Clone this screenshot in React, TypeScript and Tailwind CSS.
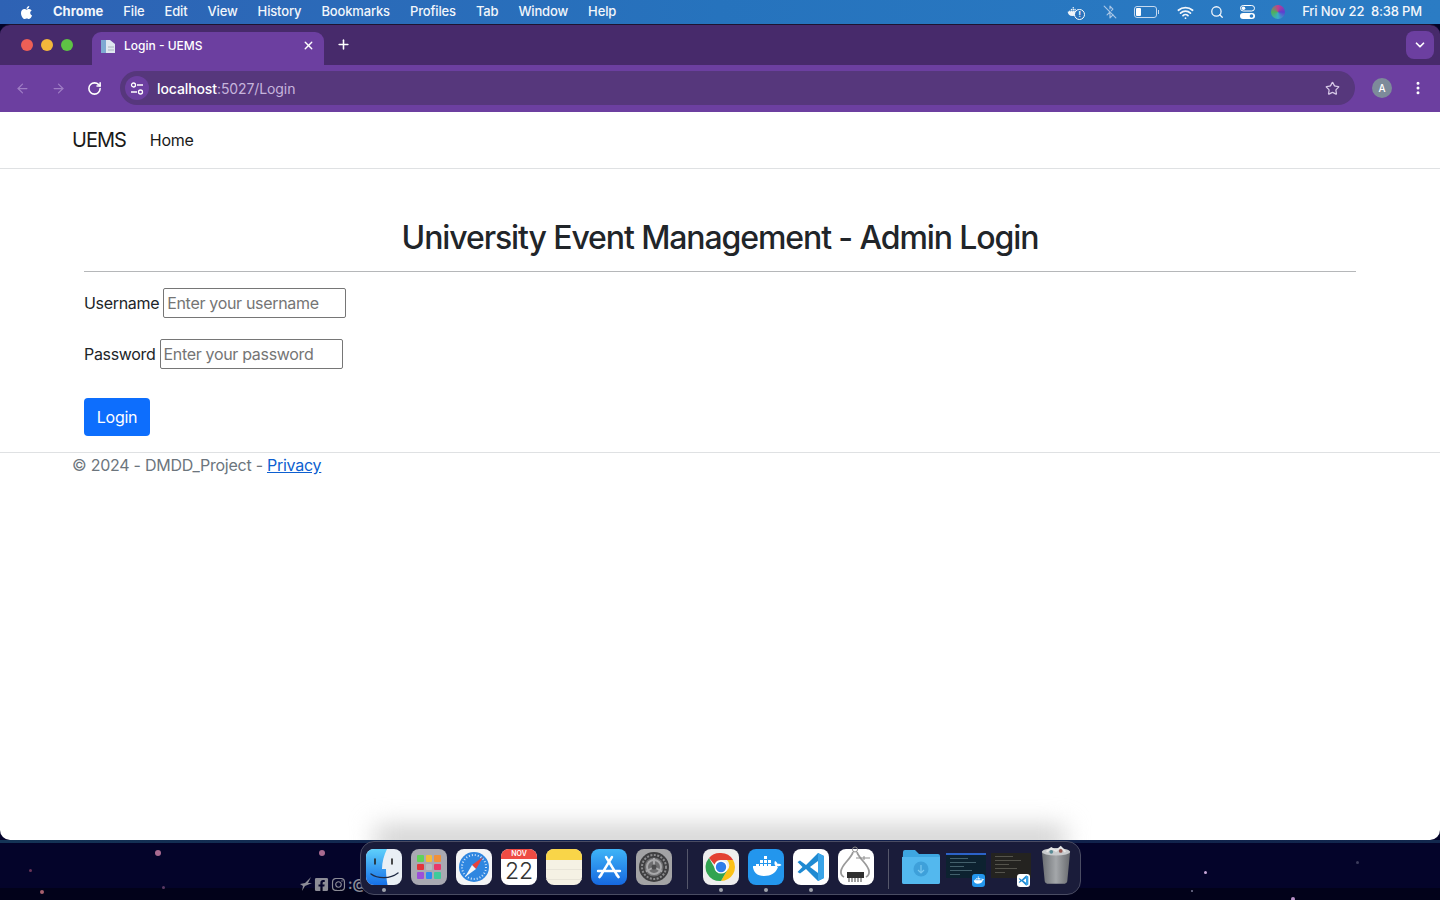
import React from 'react';
import { ArrowLeft, ArrowRight, RotateCw, Star, EllipsisVertical, ChevronDown, X, Plus, Search, Wifi, BluetoothOff } from 'lucide-react';
import { FaApple, FaFacebookSquare, FaInstagram } from 'react-icons/fa';

const FONT = 'font-[Inter,"Liberation_Sans",sans-serif]';

function FinderIcon() {
  return (
    <svg width="36" height="36" viewBox="0 0 36 36">
      <defs>
        <linearGradient id="fl" x1="0" y1="0" x2="0" y2="1"><stop offset="0" stopColor="#5fd0fb" /><stop offset="1" stopColor="#1670e8" /></linearGradient>
      </defs>
      <rect width="36" height="36" rx="8" fill="#e9eff5" />
      <path d="M8 0h13c-3 6-5 13-5 20h4c0 5 .5 11 1.500 16H8a8 8 0 0 1-8-8V8a8 8 0 0 1 8-8z" fill="url(#fl)" />
      <path d="M9 10v5M26 10v5" stroke="#222" strokeWidth="1.600" strokeLinecap="round" />
      <path d="M5 25c7 5 19 5 27-1" stroke="#1f2a44" strokeWidth="1.400" fill="none" strokeLinecap="round" />
    </svg>
  );
}

function LaunchpadIcon() {
  const colors = ['#5fd35a', '#f4bb3a', '#f0913a', '#e3343a', '#b8bcc0', '#e8386a', '#9b4fd8', '#2b8cf0', '#3ecb9a'];
  return (
    <div className="w-9 h-9 rounded-lg bg-[#a9a9b2] grid grid-cols-3 gap-[2px] p-[6px]">
      {colors.map((c, i) => <div key={i} className="rounded-[1px]" style={{ background: c }} />)}
    </div>
  );
}

function SafariIcon() {
  return (
    <svg width="36" height="36" viewBox="0 0 36 36">
      <rect width="36" height="36" rx="8" fill="#f3f4f6" />
      <circle cx="18" cy="18" r="15" fill="#2f86e0" />
      <circle cx="18" cy="18" r="12" fill="none" stroke="#cfe5fb" strokeWidth="2" strokeDasharray="1 2" />
      <path d="M27 8 16 16l4 4z" fill="#e8423c" />
      <path d="M9 28l7-12 4 4z" fill="#f4f6f8" />
    </svg>
  );
}

function CalendarIcon() {
  return (
    <div className="w-9 h-9 rounded-lg bg-white overflow-hidden flex flex-col items-center">
      <div className="w-full h-[10px] bg-[#ee4b43] text-white text-[7px] leading-[10px] font-semibold text-center">NOV</div>
      <div className="text-[#333] text-[23px] leading-[25px] font-light">22</div>
    </div>
  );
}

function NotesIcon() {
  return (
    <div className="w-9 h-9 rounded-lg bg-[#f5f1e4] overflow-hidden">
      <div className="h-[11px] bg-[#f9d548]" />
      <div className="h-[10px] border-b border-[#e8e4d8]" />
      <div className="h-[10px] border-b border-[#e8e4d8]" />
    </div>
  );
}

function AppStoreIcon() {
  return (
    <svg width="36" height="36" viewBox="0 0 36 36">
      <defs>
        <linearGradient id="as" x1="0" y1="0" x2="0" y2="1"><stop offset="0" stopColor="#3fb4f7" /><stop offset="1" stopColor="#1668e0" /></linearGradient>
      </defs>
      <rect width="36" height="36" rx="8" fill="url(#as)" />
      <path d="M15 8l11 18M21 8 10 26M7 22h22" stroke="#fff" strokeWidth="2.400" strokeLinecap="round" fill="none" />
      <path d="M26 26l1.500 2M10 26l-1.500 2" stroke="#fff" strokeWidth="2.800" strokeLinecap="round" />
    </svg>
  );
}

function SettingsIcon() {
  return (
    <svg width="36" height="36" viewBox="0 0 36 36">
      <rect width="36" height="36" rx="8" fill="#a3a3a5" />
      <circle cx="18" cy="18" r="15" fill="#3f3f41" />
      <circle cx="18" cy="18" r="12" fill="none" stroke="#8c8c8e" strokeWidth="2" strokeDasharray="2 1.500" />
      <circle cx="18" cy="18" r="9.500" fill="#6e6e70" />
      <circle cx="18" cy="18" r="7" fill="none" stroke="#a8a8aa" strokeWidth="2" />
      <path d="M18 18V9M18 18l8 4.500M18 18l-8 4.500" stroke="#a8a8aa" strokeWidth="2" />
      <circle cx="18" cy="18" r="2.500" fill="#4c4c4e" />
    </svg>
  );
}

function ChromeIcon({ size = 36 }: { size?: number }) {
  return (
    <svg width={size} height={size} viewBox="0 0 36 36">
      <rect width="36" height="36" rx="8" fill="#eeeeee" />
      <path d="M18 4a14 14 0 0 1 12.100 7H18a7 7 0 0 0-6.500 4.400L6 8.900A14 14 0 0 1 18 4z" fill="#e34133" />
      <path d="M30.100 11A14 14 0 0 1 18 32l6-10.500a7 7 0 0 0 0-10.500z" fill="#fbc116" />
      <path d="M6 8.900 12 19.500a7 7 0 0 0 12 2L18 32A14 14 0 0 1 6 8.900z" fill="#31a350" />
      <circle cx="18" cy="18" r="6.600" fill="#fff" />
      <circle cx="18" cy="18" r="5.200" fill="#2f7de9" />
    </svg>
  );
}

function DockerGlyph({ fill }: { fill: string }) {
  return (
    <g fill={fill}>
      <rect x="8" y="15" width="3" height="3" /><rect x="12" y="15" width="3" height="3" /><rect x="16" y="15" width="3" height="3" />
      <rect x="12" y="11" width="3" height="3" /><rect x="16" y="11" width="3" height="3" /><rect x="16" y="7" width="3" height="3" /><rect x="20" y="15" width="3" height="3" /><rect x="20" y="11" width="3" height="3" />
      <path d="M5 19h22c1 0 2-.5 2.500-2 1.500.5 3 0 4-1-1-1-2.500-1.500-3.800-1-.5-1.500-1.500-2.500-2.700-3-.8 1.500-.8 3.500.5 5H5c0 6 4 10 11 10 7 0 12-3 14-9H5z" />
    </g>
  );
}

function DockerIcon() {
  return (
    <svg width="36" height="36" viewBox="0 0 36 36">
      <rect width="36" height="36" rx="8" fill="#2396ed" />
      <DockerGlyph fill="#fff" />
    </svg>
  );
}

function VSCodeGlyph() {
  return (
    <g>
      <path d="M25 4 13 16l-6-4.500-2.500 1.500 5 5-5 5 2.500 1.500L13 20l12 12 6-3V7z" fill="#1f8ad2" />
      <path d="M25 4l6 3v22l-6 3z" fill="#3aa4e8" />
      <path d="M25 12v12l-8-6z" fill="#fff" />
    </g>
  );
}

function VSCodeIcon() {
  return (
    <svg width="36" height="36" viewBox="0 0 36 36">
      <rect width="36" height="36" rx="8" fill="#fff" />
      <VSCodeGlyph />
    </svg>
  );
}

function CaliperIcon() {
  return (
    <svg width="36" height="39" viewBox="0 0 36 39">
      <rect y="3" width="36" height="36" rx="8" fill="#fff" />
      <circle cx="17" cy="3.500" r="2.500" fill="none" stroke="#8a8a8a" strokeWidth="1" />
      <path d="M15 6C13 13 4 18 3 25c-.4 3 1 5 3 6M19 6c2 7 11 12 12 19 .4 3-1 5-3 6" stroke="#9a9a9a" strokeWidth="1.800" fill="none" />
      <path d="M18 12h14M26 10v4" stroke="#8d8d8d" strokeWidth="1" />
      <rect x="9" y="26" width="17" height="6" fill="#2f2f2f" />
      <path d="M11 32v4M14 32v4M17 32v4M20 32v4M23 32v4" stroke="#666" strokeWidth="1.200" />
    </svg>
  );
}

function DownloadsFolder() {
  return (
    <svg width="40" height="36" viewBox="0 0 40 36">
      <path d="M2 3a2 2 0 0 1 2-2h10l4 4h19a2 2 0 0 1 2 2v26a2 2 0 0 1-2 2H3a2 2 0 0 1-2-2z" fill="#3ea6e0" />
      <path d="M1 8h38v25a2 2 0 0 1-2 2H3a2 2 0 0 1-2-2z" fill="#53b8ee" />
      <circle cx="20" cy="20" r="7.500" fill="#3ea0da" />
      <path d="M20 16v8M17 21l3 3 3-3" stroke="#79c8f2" strokeWidth="1.200" fill="none" />
    </svg>
  );
}

function WindowThumb({ tone, vscode }: { tone: string; vscode?: boolean }) {
  const lines = ['w-[18px]', 'w-[26px]', 'w-[14px]', 'w-[22px]', 'w-[10px]'];
  return (
    <div className="w-10 h-9 relative">
      <div className="absolute inset-x-0 top-[4px] h-[25px] overflow-hidden" style={{ background: tone }}>
        {!vscode && <div className="h-[2px] bg-[#2c62c8]" />}
        <div className="pt-[3px] pl-1 flex flex-col gap-[3px]">
          {lines.map((w, i) => <div key={i} className={`${w} h-[1px] ${vscode ? 'bg-[#54534c]' : 'bg-[#43606c]'}`} />)}
        </div>
      </div>
      <div className="absolute right-[1px] bottom-[-2px] w-[13px] h-[13px] rounded-[3px] overflow-hidden">
        <svg width="13" height="13" viewBox="0 0 36 36">
          <rect width="36" height="36" fill={vscode ? '#fff' : '#2396ed'} />
          {vscode ? <VSCodeGlyph /> : <DockerGlyph fill="#fff" />}
        </svg>
      </div>
    </div>
  );
}

function TrashIcon() {
  return (
    <svg width="32" height="40" viewBox="0 0 34 40">
      <defs>
        <linearGradient id="tr" x1="0" y1="0" x2="1" y2="0"><stop offset="0" stopColor="#6b6e72" /><stop offset=".5" stopColor="#a4a7aa" /><stop offset="1" stopColor="#686a6e" /></linearGradient>
      </defs>
      <path d="M2 6h30l-3 31c0 2-2 3-4 3H9c-2 0-4-1-4-3z" fill="url(#tr)" />
      <ellipse cx="17" cy="6" rx="15" ry="4" fill="#c9cbcd" />
      <path d="M7 6l5-4 5 3 5-4 5 5" fill="none" stroke="#e7e7e7" strokeWidth="2" />
      <circle cx="12" cy="6" r="2" fill="#5a8c96" />
      <circle cx="22" cy="5" r="2" fill="#96564f" />
    </svg>
  );
}

function DockItem({ children, dot }: { children: React.ReactNode; dot?: boolean }) {
  return (
    <div className="relative w-9 h-9 flex items-end justify-center">
      {children}
      {dot && <div className="absolute -bottom-[7px] left-[16px] w-[4px] h-[4px] rounded-full bg-[#a0a4ad]" />}
    </div>
  );
}

function Dock() {
  return (
    <div className="absolute left-[360px] top-[841px] w-[721px] h-[54px] rounded-[14px] bg-[#1a1c3a] border border-[#4a4c63] flex items-start pt-[7px] pl-[5px]">
      <div className="flex gap-[9px]">
        <DockItem dot><FinderIcon /></DockItem>
        <DockItem><LaunchpadIcon /></DockItem>
        <DockItem><SafariIcon /></DockItem>
        <DockItem><CalendarIcon /></DockItem>
        <DockItem><NotesIcon /></DockItem>
        <DockItem><AppStoreIcon /></DockItem>
        <DockItem><SettingsIcon /></DockItem>
      </div>
      <div className="w-px h-10 bg-[#55576b] mx-[15px]" />
      <div className="flex gap-[9px]">
        <DockItem dot><ChromeIcon /></DockItem>
        <DockItem dot><DockerIcon /></DockItem>
        <DockItem dot><VSCodeIcon /></DockItem>
        <DockItem><CaliperIcon /></DockItem>
      </div>
      <div className="w-px h-10 bg-[#55576b] ml-[14px] mr-[12px]" />
      <div className="flex gap-[5px]">
        <DownloadsFolder />
        <WindowThumb tone="#0d2230" />
        <WindowThumb tone="#242320" vscode />
        <div className="-mt-[4px] ml-[4px]"><TrashIcon /></div>
      </div>
    </div>
  );
}

const STARS = [
  { x: 155, y: 10, s: 6, c: '#a86a90' },
  { x: 319, y: 10, s: 6, c: '#a86a90' },
  { x: 29, y: 29, s: 3, c: '#6a3458' },
  { x: 40, y: 50, s: 4, c: '#a8606e' },
  { x: 162, y: 46, s: 3, c: '#5a3a64' },
  { x: 1204, y: 31, s: 3, c: '#c8a8d8' },
  { x: 1191, y: 50, s: 2, c: '#7a7a96' },
  { x: 1291, y: 57, s: 4, c: '#b890c8' },
  { x: 1356, y: 21, s: 3, c: '#3c3c5c' },
];

function Wallpaper() {
  return (
    <div className="h-[60px] relative overflow-hidden bg-[#04042a]">
      <div className="h-[3px] bg-gradient-to-r from-[#143456] via-[#101c4a] to-[#12284e]" />
      <div className="absolute bottom-0 inset-x-0 h-[12px] bg-[#02021a]" />
      {STARS.map((d, i) => (
        <div key={i} className="absolute rounded-full" style={{ left: d.x, top: d.y, width: d.s, height: d.s, background: d.c }} />
      ))}
      <div className="absolute left-[300px] top-[36px] flex items-center gap-[2px] text-[#8c8c96]">
        <svg width="12" height="14" viewBox="0 0 12 14"><path d="M0 7l5-1 6-6-3 6 4 0-7 3-3 5 1-5z" fill="currentColor" /></svg>
        <FaFacebookSquare size={15} />
        <FaInstagram size={15} />
        <span className="text-[14px] leading-4 font-semibold">:@</span>
      </div>
    </div>
  );
}

function MenuBar() {
  const items = ['File', 'Edit', 'View', 'History', 'Bookmarks', 'Profiles', 'Tab', 'Window', 'Help'];
  return (
    <div className="h-6 flex items-center justify-between bg-gradient-to-r from-[#2e62b4] via-[#2673bd] to-[#2b7cc4] text-[#f2f6fb] text-[13px] pl-[19px] pr-[18px]">
      <div className="flex items-center">
        <FaApple size={15} className="text-white mr-[19px]" />
        <span className="font-bold mr-[20px]">Chrome</span>
        <div className="flex gap-[20px] tracking-[-0.15px]">
          {items.map((m) => <span key={m} className="font-medium">{m}</span>)}
        </div>
      </div>
      <div className="flex items-center">
        <div className="relative mr-[18px] w-[20px] h-[16px]">
          <svg width="17" height="16" viewBox="0 0 36 36"><DockerGlyph fill="#eef3f8" /></svg>
          <div className="absolute right-0 bottom-0 w-[11px] h-[11px] rounded-full border border-white bg-[#2a72bb] text-[8px] leading-[9px] text-center font-bold">!</div>
        </div>
        <BluetoothOff size={14} className="text-[#a9c6e6] mr-[17px]" />
        <div className="flex items-center mr-[18px]">
          <div className="w-[23px] h-[12px] rounded-[3px] border border-[#c5d9ef] p-[1px]"><div className="w-[5px] h-full rounded-[1px] bg-white" /></div>
          <div className="w-[1px] h-[4px] bg-[#c5d9ef] ml-[1px]" />
        </div>
        <Wifi size={17} strokeWidth={2.5} className="mr-[16px]" />
        <Search size={14} strokeWidth={2.2} className="mr-[16px]" />
        <svg width="15" height="14" viewBox="0 0 15 14" className="mr-[16px]">
          <rect x=".5" y=".5" width="14" height="5.500" rx="2.750" fill="none" stroke="#fff" />
          <circle cx="3.500" cy="3.250" r="1.800" fill="#fff" />
          <rect y="8" width="15" height="6" rx="3" fill="#fff" />
          <circle cx="11.500" cy="11" r="1.800" fill="#2b7cc4" />
        </svg>
        <div className="w-[14px] h-[14px] rounded-full bg-[conic-gradient(#c43d8c,#5b3fd0,#37b0c8,#4fb05a,#c43d8c)] mr-[17px]" />
        <span className="font-medium tracking-[-0.15px]">Fri Nov 22&nbsp; 8:38 PM</span>
      </div>
    </div>
  );
}

function TabStrip() {
  return (
    <div className="h-10 bg-[#472a6b] flex items-end">
      <div className="flex gap-2 pl-[21px] h-full items-center">
        <div className="w-3 h-3 rounded-full bg-[#ed5f56]" />
        <div className="w-3 h-3 rounded-full bg-[#f3b73b]" />
        <div className="w-3 h-3 rounded-full bg-[#5ec345]" />
      </div>
      <div className="w-[232px] h-[33px] rounded-t-[9px] bg-[#6c3fa0] flex items-center pl-[8px] pr-[9px] pb-[6px] ml-[19px] text-white text-[12px] font-medium">
        <svg width="16" height="16" viewBox="0 0 16 16" className="mr-[8px]">
          <path d="M1 2h9l5 4v9H1z" fill="#dfe7f0" />
          <rect x="1" y="2" width="5" height="13" fill="#7ea9d2" />
          <path d="M8 9h6M8 12h6" stroke="#aab4c0" />
        </svg>
        <span className="flex-1">Login - UEMS</span>
        <X size={13} strokeWidth={2.5} />
      </div>
      <Plus size={15} strokeWidth={2.5} className="text-white ml-[12px] mb-[13px]" />
      <div className="ml-auto mr-[6px] mb-[6px] w-7 h-7 rounded-lg bg-[#6c3fa0] flex items-center justify-center">
        <ChevronDown size={14} strokeWidth={3} className="text-white" />
      </div>
    </div>
  );
}

function Toolbar() {
  return (
    <div className="h-[47px] bg-[#6c3fa0] flex items-center pl-[15px] pr-[14px] pb-[1px]">
      <ArrowLeft size={15} className="text-[#9e7cc4]" />
      <ArrowRight size={15} className="text-[#9e7cc4] ml-[21px]" />
      <RotateCw size={15} strokeWidth={2.5} className="text-white ml-[21px]" />
      <div className="ml-[18px] flex-1 h-[34px] rounded-full bg-[#56377c] flex items-center pl-[5px] pr-[15px] text-[14px] tracking-[-0.1px]">
        <div className="w-6 h-6 rounded-full bg-[#6c3fa0] flex items-center justify-center mr-[8px]">
          <svg width="14" height="13" viewBox="0 0 14 13" fill="none" stroke="#fff" strokeWidth="1.300">
            <circle cx="3.500" cy="3" r="2" />
            <path d="M7 3h6M1 10h6" />
            <circle cx="10.500" cy="10" r="2" />
          </svg>
        </div>
        <span className="text-white font-medium">localhost</span>
        <span className="text-[#c6b4dc]">:5027/Login</span>
        <Star size={15} className="ml-auto text-[#d6c8e6]" />
      </div>
      <div className="ml-[17px] w-5 h-5 rounded-full bg-[#7d8b9a] text-white text-[10px] font-medium flex items-center justify-center">A</div>
      <EllipsisVertical size={16} strokeWidth={2.5} className="text-white ml-[18px]" />
    </div>
  );
}

function Page() {
  return (
    <div className="flex-1 bg-white">
      <div className="h-[57px] border-b border-[#dfe1e3] flex items-center pl-[72px]">
        <span className="text-[20px] text-[#1a1a1a] tracking-[-1px] mr-[24px] mb-[1px]">UEMS</span>
        <span className="text-[16px] text-[#1a1a1a] tracking-[-0.25px] mb-[1px]">Home</span>
      </div>
      <div className="px-[84px] pt-[49px] h-[284px] border-b border-[#dfe1e3]">
        <h1 className="text-[32px] leading-[40px] font-medium text-[#212529] text-center tracking-[-1.1px]">University Event Management - Admin Login</h1>
        <hr className="mt-[13px] border-[#b5b7b9]" />
        <div className="mt-4 flex items-center text-[16px] tracking-[-0.32px] text-[#212529] h-[30px]">
          <label className="mr-1">Username</label>
          <input placeholder="Enter your username" className="w-[183px] h-[30px] border border-[#767676] rounded-[2px] px-[3px] outline-none placeholder:text-[#757575]" />
        </div>
        <div className="mt-[21px] flex items-center text-[16px] tracking-[-0.32px] text-[#212529] h-[30px]">
          <label className="mr-1">Password</label>
          <input placeholder="Enter your password" className="w-[183px] h-[30px] border border-[#767676] rounded-[2px] px-[3px] outline-none placeholder:text-[#757575]" />
        </div>
        <button className="mt-[29px] w-[66px] h-[38px] rounded-[4px] bg-[#0d6efd] text-white text-[16px] tracking-[-0.3px]">Login</button>
      </div>
      <div className="pl-[72px] text-[16px] leading-[24px] tracking-[-0.25px] text-[#6c757d]">
        © 2024 - DMDD_Project - <a className="text-[#0d5fd0] underline">Privacy</a>
      </div>
    </div>
  );
}

export default function App() {
  return (
    <div className={`relative w-[1440px] h-[900px] overflow-hidden flex flex-col bg-[#04042a] ${FONT}`}>
      <MenuBar />
      <div className="flex-1 flex flex-col rounded-[10px] overflow-hidden border-t border-[#1e1430]">
        <TabStrip />
        <Toolbar />
        <Page />
      </div>
      <div className="absolute left-[375px] top-[826px] w-[690px] h-[26px] bg-[#cfcfcf] blur-[12px]" />
      <Wallpaper />
      <Dock />
    </div>
  );
}
